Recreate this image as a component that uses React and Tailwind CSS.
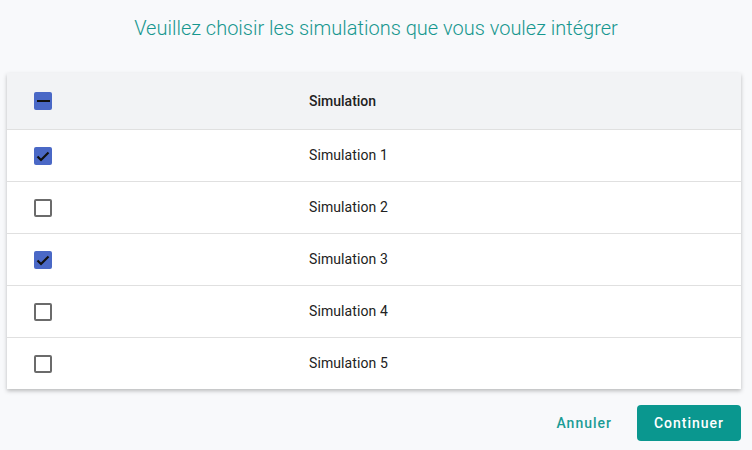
import React from "react";

function Box({ state }) {
  if (state === "none") {
    return <div className="w-[18px] h-[18px] rounded-[2px] border-2 border-[#6b6b6b] bg-white" />;
  }
  return (
    <div className="w-[18px] h-[18px] rounded-[2px] bg-[#4a68c6] flex items-center justify-center">
      {state === "check" ? (
        <svg width="18" height="18" viewBox="0 0 18 18">
          <path d="M3.5 9.5L7 13L14.5 5.5" fill="none" stroke="#111" strokeWidth="2.2" />
        </svg>
      ) : (
        <div className="w-[13px] h-[2px] bg-[#111]" />
      )}
    </div>
  );
}

const rows = [
  ["Simulation 1", "check"],
  ["Simulation 2", "none"],
  ["Simulation 3", "check"],
  ["Simulation 4", "none"],
  ["Simulation 5", "none"],
];

export default function App() {
  return (
    <div className="w-[752px] h-[450px] bg-[#f8f9fb] font-['Roboto',sans-serif] overflow-hidden">
      <div className="pt-[13px] h-[73px] text-center text-[20px] font-light text-[#17978f]">
        Veuillez choisir les simulations que vous voulez intégrer
      </div>
      <div className="ml-[7px] w-[734px] bg-white shadow-[0_2px_4px_rgba(0,0,0,0.25)]">
        <div className="h-[57px] bg-[#f2f3f5] border-b border-[#e0e0e0] flex items-center">
          <div className="w-[302px] pl-[27px]"><Box state="minus" /></div>
          <div className="text-[14px] font-medium text-[#222]">Simulation</div>
        </div>
        {rows.map(([label, st], i) => (
          <div key={label} className={`flex items-center ${i < rows.length - 1 ? "h-[52px] border-b border-[#e0e0e0]" : "h-[51px]"}`}>
            <div className="w-[302px] pl-[27px]"><Box state={st} /></div>
            <div className="text-[14px] text-[#222] tracking-[0.1px]">{label}</div>
          </div>
        ))}
      </div>
      <div className="mt-[16px] w-[741px] flex justify-end items-center">
        <button className="h-[36px] px-[10px] mr-[15px] text-[14px] font-medium tracking-[1px] text-[#1a9c95]">Annuler</button>
        <button className="h-[36px] w-[104px] rounded-[4px] bg-[#0a978f] text-white text-[14px] font-medium tracking-[1px]">Continuer</button>
      </div>
    </div>
  );
}
